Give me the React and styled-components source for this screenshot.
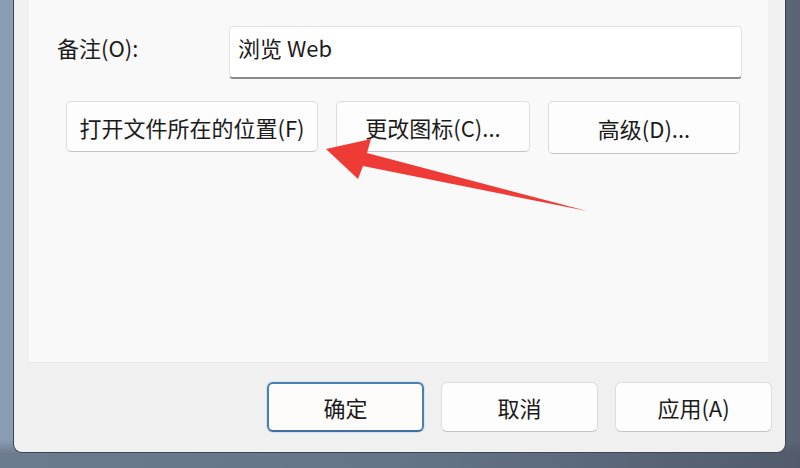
import React from "react";
import styled, { createGlobalStyle } from "styled-components";

const GlobalStyle = createGlobalStyle`
  html, body {
    margin: 0;
    padding: 0;
    background: #6f7d90;
  }
  * {
    box-sizing: border-box;
  }
`;

const App = () => {
  return (
    <Desktop>
      <GlobalStyle />
      <Window>
        <Panel>
          <FieldRow>
            <Label>备注(O):</Label>
            <TextBox>浏览 Web</TextBox>
          </FieldRow>
          <ButtonRow>
            <Button width="252px">打开文件所在的位置(F)</Button>
            <Button width="194px">更改图标(C)...</Button>
            <Button width="192px" height="53px">高级(D)...</Button>
          </ButtonRow>
        </Panel>
        <Footer>
          <FooterButton primary>确定</FooterButton>
          <FooterButton>取消</FooterButton>
          <FooterButton>应用(A)</FooterButton>
        </Footer>
      </Window>
      <Arrow viewBox="0 0 800 468" width="800" height="468">
        <polygon
          points="326,149 371,139 367,153 587,211 363,166 358,179"
          fill="#ef3b36"
        />
      </Arrow>
    </Desktop>
  );
};

const Desktop = styled.div`
  position: relative;
  width: 800px;
  height: 468px;
  overflow: hidden;
  background:
    linear-gradient(180deg, rgba(0, 0, 0, 0) 94%, rgba(70, 80, 98, 0.45) 97%),
    linear-gradient(90deg, #8b9db3 0%, #7f91a8 50%, #5a6474 100%);
  font-family: "Noto Sans CJK SC", "Noto Sans", sans-serif;
  color: #1b1b1b;
`;

const Window = styled.div`
  display: flex;
  flex-direction: column;
  margin-left: 13px;
  width: 773px;
  height: 453px;
  background: #f0f0f0;
  border: 1px solid #3c4552;
  border-top: none;
  border-radius: 0 0 9px 9px;
`;

const Panel = styled.div`
  height: 363px;
  margin: 0 17px 0 15px;
  padding: 26px 0 0 28px;
  background: #f9f9f9;
  border-bottom: 1px solid #e8e8e8;
`;

const FieldRow = styled.div`
  display: flex;
  align-items: flex-start;
`;

const Label = styled.div`
  width: 172px;
  padding-top: 6px;
  font-size: 22px;
  line-height: 30px;
`;

const TextBox = styled.div`
  width: 513px;
  height: 53px;
  padding: 5px 8px;
  font-size: 22px;
  line-height: 30px;
  background: #ffffff;
  border: 1px solid #e3e3e3;
  border-bottom: 2px solid #8a8a8a;
  border-radius: 4px;
`;

const ButtonRow = styled.div`
  display: flex;
  align-items: flex-start;
  gap: 18px;
  margin-top: 22px;
  padding-left: 9px;
`;

const Button = styled.div`
  display: flex;
  align-items: center;
  justify-content: center;
  width: ${(p) => p.width};
  height: ${(p) => p.height || "51px"};
  font-size: 22px;
  background: #fdfdfd;
  border: 1px solid #dcdcdc;
  border-bottom-color: #c4c4c4;
  border-radius: 5px;
`;

const Footer = styled.div`
  display: flex;
  justify-content: flex-end;
  gap: 17px;
  padding: 19px 13px 0 0;
`;

const FooterButton = styled.div`
  display: flex;
  align-items: center;
  justify-content: center;
  width: 157px;
  height: 50px;
  font-size: 22px;
  background: ${(p) => (p.primary ? "#fefcfa" : "#fdfdfd")};
  border: ${(p) => (p.primary ? "2px solid #4b7fad" : "1px solid #dcdcdc")};
  border-bottom-color: ${(p) => (p.primary ? "#3f6f9a" : "#c4c4c4")};
  border-radius: 6px;
  box-shadow: ${(p) => (p.primary ? "0 0 0 1px #cfe3f3" : "none")};
`;

const Arrow = styled.svg`
  position: absolute;
  left: 0;
  top: 0;
  pointer-events: none;
`;

export default App;
